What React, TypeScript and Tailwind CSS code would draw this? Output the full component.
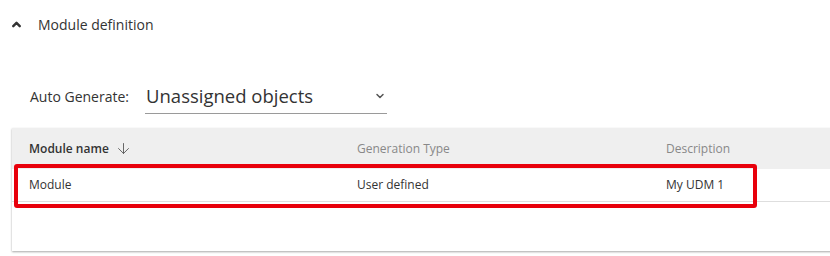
import { ChevronDown, ChevronUp, ArrowDown } from 'lucide-react';

const App = () => {
  return (
    <div className="relative w-[830px] h-[256px] bg-white overflow-hidden font-['Open_Sans',sans-serif] text-[#333]">
      <div className="flex items-center h-[48px] pl-[10px]">
        <ChevronUp className="w-[13px] h-[13px]" strokeWidth={4.5} />
        <span className="ml-[15px] text-[14px]">Module definition</span>
      </div>

      <div className="flex items-end pl-[30px] mt-[30px] h-[36px]">
        <span className="text-[14px] pb-[7px]">Auto Generate:</span>
        <div className="ml-[16px] w-[242px] flex items-center justify-between border-b border-[#9a9a9a] pb-[4px]">
          <span className="text-[18.5px] leading-[26px] pl-[1px]">Unassigned objects</span>
          <ChevronDown className="w-[12px] h-[12px] mr-[1px] text-[#555]" strokeWidth={3} />
        </div>
      </div>

      <div className="ml-[12px] mt-[14px] w-[830px] h-[123px] bg-white shadow-[0_1px_2px_rgba(0,0,0,0.35)]">
        <div className="flex items-center h-[41px] bg-[#efefef] text-[12px]">
          <div className="w-[345px] pl-[17px] flex items-center font-semibold text-[#333]">
            Module name
            <ArrowDown className="ml-[6px] w-[17px] h-[17px] text-[#555]" strokeWidth={1.25} />
          </div>
          <div className="w-[309px] text-[#888]">Generation Type</div>
          <div className="text-[#888]">Description</div>
        </div>
        <div className="flex items-center h-[33px] border-b border-[#dedede] text-[12px] text-[#333]">
          <div className="w-[345px] pl-[17px]">Module</div>
          <div className="w-[309px]">User defined</div>
          <div>My UDM 1</div>
        </div>
      </div>

      <div className="absolute left-[14px] top-[164px] w-[743px] h-[44px] border-[4px] border-[#e8000b] rounded-[3px]" />
    </div>
  );
};

export default App;
